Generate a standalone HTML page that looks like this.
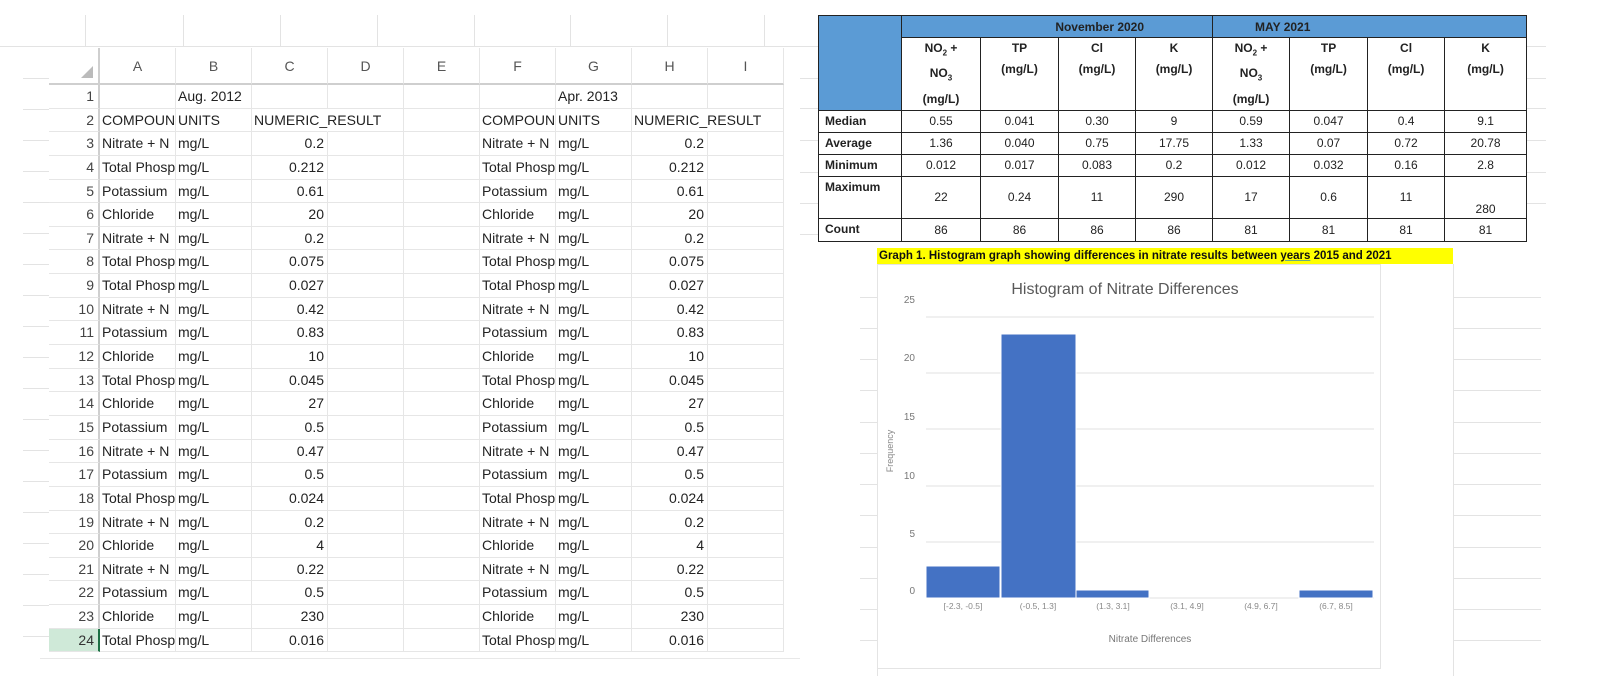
<!DOCTYPE html>
<html><head><meta charset="utf-8">
<style>
*{margin:0;padding:0;box-sizing:border-box}
body{width:1602px;height:698px;background:#fff;position:relative;overflow:hidden;font-family:"Liberation Sans",sans-serif}
.a{position:absolute}
.hl{position:absolute;height:1px;background:#e3e3e3}
.vl{position:absolute;width:1px;background:#e3e3e3}
.sheet{position:absolute;left:49px;top:48px;width:733px;font-size:14px;color:#222}
.row{display:flex;height:23.65px;line-height:23px;position:relative}
.row>div{flex:0 0 76px;width:76px;border-right:1px solid #e6e6e6;border-bottom:1px solid #e6e6e6;overflow:hidden;white-space:nowrap;padding:0 2px;position:relative}
.row>div.n{flex:0 0 51px;width:51px;text-align:right;color:#444;border-right:2px solid #cfcfcf;padding-right:4px}
.row>div.r{text-align:right;padding-right:3px}
.row.h{height:37px;line-height:36px}
.row.h>div{text-align:center;color:#555;border-bottom:2px solid #cfcfcf}
.ov{position:absolute;white-space:nowrap;line-height:23px}
table.t{position:absolute;left:818px;top:15px;width:708px;border-collapse:collapse;table-layout:fixed;font-size:12px;color:#222}
table.t td{border:1px solid #222;text-align:center;vertical-align:middle;padding:0;overflow:hidden}
table.t .b{font-weight:bold}
table.t .bl{background:#5b9bd5}
table.t td.lb{text-align:left;font-weight:bold;padding-left:6px;vertical-align:top;padding-top:3px}
table.t td.hd{font-weight:bold;vertical-align:top;line-height:21px}
</style></head><body>
<div class="hl" style="left:0;top:46px;width:800px"></div>
<div class="vl" style="left:85px;top:15px;height:32px"></div>
<div class="vl" style="left:183px;top:15px;height:32px"></div>
<div class="vl" style="left:280px;top:15px;height:32px"></div>
<div class="vl" style="left:377px;top:15px;height:32px"></div>
<div class="vl" style="left:474px;top:15px;height:32px"></div>
<div class="vl" style="left:570px;top:15px;height:32px"></div>
<div class="vl" style="left:667px;top:15px;height:32px"></div>
<div class="vl" style="left:764px;top:15px;height:32px"></div>
<div class="hl" style="left:23px;top:78px;width:26px"></div>
<div class="hl" style="left:23px;top:109px;width:26px"></div>
<div class="hl" style="left:23px;top:140px;width:26px"></div>
<div class="hl" style="left:23px;top:171px;width:26px"></div>
<div class="hl" style="left:23px;top:202px;width:26px"></div>
<div class="hl" style="left:23px;top:233px;width:26px"></div>
<div class="hl" style="left:23px;top:264px;width:26px"></div>
<div class="hl" style="left:23px;top:295px;width:26px"></div>
<div class="hl" style="left:23px;top:326px;width:26px"></div>
<div class="hl" style="left:23px;top:357px;width:26px"></div>
<div class="hl" style="left:23px;top:388px;width:26px"></div>
<div class="hl" style="left:23px;top:419px;width:26px"></div>
<div class="hl" style="left:23px;top:450px;width:26px"></div>
<div class="hl" style="left:23px;top:481px;width:26px"></div>
<div class="hl" style="left:23px;top:512px;width:26px"></div>
<div class="hl" style="left:23px;top:543px;width:26px"></div>
<div class="hl" style="left:23px;top:574px;width:26px"></div>
<div class="hl" style="left:23px;top:605px;width:26px"></div>
<div class="hl" style="left:23px;top:636px;width:26px"></div>
<div class="hl" style="left:40px;top:658px;width:760px;background:#e8e8e8"></div>

<div class="sheet">
<div class="row h"><div class="n" style="position:relative"><span style="position:absolute;right:5px;bottom:5px;width:0;height:0;border-left:12px solid transparent;border-bottom:12px solid #bbb"></span></div><div>A</div><div>B</div><div>C</div><div>D</div><div>E</div><div>F</div><div>G</div><div>H</div><div>I</div></div>
<div class="row"><div class="n">1</div><div></div><div>Aug. 2012</div><div></div><div></div><div></div><div></div><div>Apr. 2013</div><div></div><div></div></div>
<div class="row"><div class="n">2</div><div>COMPOUND</div><div>UNITS</div><div style="border-right-color:transparent;overflow:visible">NUMERIC_RESULT</div><div></div><div></div><div>COMPOUND</div><div>UNITS</div><div style="border-right-color:transparent;overflow:visible">NUMERIC_RESULT</div><div></div></div>
<div class="row"><div class="n">3</div><div>Nitrate + N</div><div>mg/L</div><div class="r">0.2</div><div></div><div></div><div>Nitrate + N</div><div>mg/L</div><div class="r">0.2</div><div></div></div>
<div class="row"><div class="n">4</div><div>Total Phosphorus</div><div>mg/L</div><div class="r">0.212</div><div></div><div></div><div>Total Phosphorus</div><div>mg/L</div><div class="r">0.212</div><div></div></div>
<div class="row"><div class="n">5</div><div>Potassium</div><div>mg/L</div><div class="r">0.61</div><div></div><div></div><div>Potassium</div><div>mg/L</div><div class="r">0.61</div><div></div></div>
<div class="row"><div class="n">6</div><div>Chloride</div><div>mg/L</div><div class="r">20</div><div></div><div></div><div>Chloride</div><div>mg/L</div><div class="r">20</div><div></div></div>
<div class="row"><div class="n">7</div><div>Nitrate + N</div><div>mg/L</div><div class="r">0.2</div><div></div><div></div><div>Nitrate + N</div><div>mg/L</div><div class="r">0.2</div><div></div></div>
<div class="row"><div class="n">8</div><div>Total Phosphorus</div><div>mg/L</div><div class="r">0.075</div><div></div><div></div><div>Total Phosphorus</div><div>mg/L</div><div class="r">0.075</div><div></div></div>
<div class="row"><div class="n">9</div><div>Total Phosphorus</div><div>mg/L</div><div class="r">0.027</div><div></div><div></div><div>Total Phosphorus</div><div>mg/L</div><div class="r">0.027</div><div></div></div>
<div class="row"><div class="n">10</div><div>Nitrate + N</div><div>mg/L</div><div class="r">0.42</div><div></div><div></div><div>Nitrate + N</div><div>mg/L</div><div class="r">0.42</div><div></div></div>
<div class="row"><div class="n">11</div><div>Potassium</div><div>mg/L</div><div class="r">0.83</div><div></div><div></div><div>Potassium</div><div>mg/L</div><div class="r">0.83</div><div></div></div>
<div class="row"><div class="n">12</div><div>Chloride</div><div>mg/L</div><div class="r">10</div><div></div><div></div><div>Chloride</div><div>mg/L</div><div class="r">10</div><div></div></div>
<div class="row"><div class="n">13</div><div>Total Phosphorus</div><div>mg/L</div><div class="r">0.045</div><div></div><div></div><div>Total Phosphorus</div><div>mg/L</div><div class="r">0.045</div><div></div></div>
<div class="row"><div class="n">14</div><div>Chloride</div><div>mg/L</div><div class="r">27</div><div></div><div></div><div>Chloride</div><div>mg/L</div><div class="r">27</div><div></div></div>
<div class="row"><div class="n">15</div><div>Potassium</div><div>mg/L</div><div class="r">0.5</div><div></div><div></div><div>Potassium</div><div>mg/L</div><div class="r">0.5</div><div></div></div>
<div class="row"><div class="n">16</div><div>Nitrate + N</div><div>mg/L</div><div class="r">0.47</div><div></div><div></div><div>Nitrate + N</div><div>mg/L</div><div class="r">0.47</div><div></div></div>
<div class="row"><div class="n">17</div><div>Potassium</div><div>mg/L</div><div class="r">0.5</div><div></div><div></div><div>Potassium</div><div>mg/L</div><div class="r">0.5</div><div></div></div>
<div class="row"><div class="n">18</div><div>Total Phosphorus</div><div>mg/L</div><div class="r">0.024</div><div></div><div></div><div>Total Phosphorus</div><div>mg/L</div><div class="r">0.024</div><div></div></div>
<div class="row"><div class="n">19</div><div>Nitrate + N</div><div>mg/L</div><div class="r">0.2</div><div></div><div></div><div>Nitrate + N</div><div>mg/L</div><div class="r">0.2</div><div></div></div>
<div class="row"><div class="n">20</div><div>Chloride</div><div>mg/L</div><div class="r">4</div><div></div><div></div><div>Chloride</div><div>mg/L</div><div class="r">4</div><div></div></div>
<div class="row"><div class="n">21</div><div>Nitrate + N</div><div>mg/L</div><div class="r">0.22</div><div></div><div></div><div>Nitrate + N</div><div>mg/L</div><div class="r">0.22</div><div></div></div>
<div class="row"><div class="n">22</div><div>Potassium</div><div>mg/L</div><div class="r">0.5</div><div></div><div></div><div>Potassium</div><div>mg/L</div><div class="r">0.5</div><div></div></div>
<div class="row"><div class="n">23</div><div>Chloride</div><div>mg/L</div><div class="r">230</div><div></div><div></div><div>Chloride</div><div>mg/L</div><div class="r">230</div><div></div></div>
<div class="row"><div class="n" style="background:#cfe9d8;border-right:2px solid #1e7145;color:#333">24</div><div>Total Phosphorus</div><div>mg/L</div><div class="r">0.016</div><div></div><div></div><div>Total Phosphorus</div><div>mg/L</div><div class="r">0.016</div><div></div></div>
</div>

<div class="hl" style="left:800px;top:46px;width:18px"></div>
<div class="hl" style="left:800px;top:78px;width:18px"></div>
<div class="hl" style="left:800px;top:108px;width:18px"></div>
<div class="hl" style="left:800px;top:140px;width:18px"></div>
<div class="hl" style="left:800px;top:172px;width:18px"></div>
<div class="hl" style="left:800px;top:203px;width:18px"></div>
<div class="hl" style="left:800px;top:234px;width:18px"></div>
<div class="hl" style="left:1526px;top:46px;width:20px"></div>
<div class="hl" style="left:1526px;top:78px;width:20px"></div>
<div class="hl" style="left:1526px;top:108px;width:20px"></div>
<div class="hl" style="left:1526px;top:140px;width:20px"></div>
<div class="hl" style="left:1526px;top:172px;width:20px"></div>
<div class="hl" style="left:1526px;top:203px;width:20px"></div>

<table class="t">
<colgroup><col style="width:83px"><col style="width:79px"><col style="width:78px"><col style="width:77px"><col style="width:77px"><col style="width:77px"><col style="width:78px"><col style="width:77px"><col style="width:82px"></colgroup>
<tr style="height:22px"><td class="bl" rowspan="2"></td><td class="bl b" colspan="4" style="text-align:right;padding-right:68px">November 2020</td><td class="bl b" colspan="4" style="text-align:left;padding-left:42px">MAY 2021</td></tr>
<tr style="height:68px"><td class="hd">NO<sub style="font-size:8px">2</sub> +<br>NO<sub style="font-size:8px">3</sub><br>(mg/L)</td><td class="hd">TP<br>(mg/L)</td><td class="hd">Cl<br>(mg/L)</td><td class="hd">K<br>(mg/L)</td><td class="hd">NO<sub style="font-size:8px">2</sub> +<br>NO<sub style="font-size:8px">3</sub><br>(mg/L)</td><td class="hd">TP<br>(mg/L)</td><td class="hd">Cl<br>(mg/L)</td><td class="hd">K<br>(mg/L)</td></tr>
<tr style="height:22px"><td class="lb">Median</td><td>0.55</td><td>0.041</td><td>0.30</td><td>9</td><td>0.59</td><td>0.047</td><td>0.4</td><td>9.1</td></tr>
<tr style="height:22px"><td class="lb">Average</td><td>1.36</td><td>0.040</td><td>0.75</td><td>17.75</td><td>1.33</td><td>0.07</td><td>0.72</td><td>20.78</td></tr>
<tr style="height:22px"><td class="lb">Minimum</td><td>0.012</td><td>0.017</td><td>0.083</td><td>0.2</td><td>0.012</td><td>0.032</td><td>0.16</td><td>2.8</td></tr>
<tr style="height:42px"><td class="lb">Maximum</td><td>22</td><td>0.24</td><td>11</td><td>290</td><td>17</td><td>0.6</td><td>11</td><td style="vertical-align:bottom;padding-bottom:2px">280</td></tr>
<tr style="height:23px"><td class="lb">Count</td><td>86</td><td>86</td><td>86</td><td>86</td><td>81</td><td>81</td><td>81</td><td>81</td></tr>
</table>

<div class="a" style="left:877px;top:248px;width:576px;height:16px;background:#ffff00;font-weight:bold;font-size:11.5px;line-height:16px;color:#111;white-space:nowrap;padding-left:2px;overflow:hidden">Graph 1. Histogram graph showing differences in nitrate results between <span style="text-decoration:underline;text-decoration-color:#6a8;">years</span> 2015 and 2021</div>

<div class="vl" style="left:877px;top:264px;height:412px"></div>
<div class="vl" style="left:1453px;top:264px;height:412px"></div>
<div class="hl" style="left:860px;top:297px;width:17px"></div><div class="hl" style="left:1453px;top:297px;width:88px"></div>
<div class="hl" style="left:860px;top:328px;width:17px"></div><div class="hl" style="left:1453px;top:328px;width:88px"></div>
<div class="hl" style="left:860px;top:359px;width:17px"></div><div class="hl" style="left:1453px;top:359px;width:88px"></div>
<div class="hl" style="left:860px;top:390px;width:17px"></div><div class="hl" style="left:1453px;top:390px;width:88px"></div>
<div class="hl" style="left:860px;top:422px;width:17px"></div><div class="hl" style="left:1453px;top:422px;width:88px"></div>
<div class="hl" style="left:860px;top:453px;width:17px"></div><div class="hl" style="left:1453px;top:453px;width:88px"></div>
<div class="hl" style="left:860px;top:484px;width:17px"></div><div class="hl" style="left:1453px;top:484px;width:88px"></div>
<div class="hl" style="left:860px;top:515px;width:17px"></div><div class="hl" style="left:1453px;top:515px;width:88px"></div>
<div class="hl" style="left:860px;top:547px;width:17px"></div><div class="hl" style="left:1453px;top:547px;width:88px"></div>
<div class="hl" style="left:860px;top:578px;width:17px"></div><div class="hl" style="left:1453px;top:578px;width:88px"></div>
<div class="hl" style="left:860px;top:609px;width:17px"></div><div class="hl" style="left:1453px;top:609px;width:88px"></div>
<div class="hl" style="left:860px;top:640px;width:17px"></div><div class="hl" style="left:1453px;top:640px;width:88px"></div>

<svg class="a" style="left:877px;top:264px" width="506" height="410" viewBox="0 0 506 410">
<rect x="0.5" y="0.5" width="503" height="404" fill="#fff" stroke="#e4e4e4"/>
<g stroke="#e2e2e2" stroke-width="1">
<line x1="49" y1="53" x2="497" y2="53"/>
<line x1="49" y1="109" x2="497" y2="109"/>
<line x1="49" y1="165" x2="497" y2="165"/>
<line x1="49" y1="222" x2="497" y2="222"/>
<line x1="49" y1="278" x2="497" y2="278"/>
<line x1="49" y1="334" x2="497" y2="334"/>
</g>
<g fill="#4472c4" stroke="#fff" stroke-width="1">
<rect x="49" y="302" width="74" height="32"/>
<rect x="124" y="70" width="75" height="264"/>
<rect x="199" y="326" width="73" height="8"/>
<rect x="422" y="326" width="74" height="8"/>
</g>
<text x="248" y="30" text-anchor="middle" font-family="Liberation Sans, sans-serif" font-size="16" fill="#595959">Histogram of Nitrate Differences</text>
<g font-family="Liberation Sans, sans-serif" font-size="10" fill="#777" text-anchor="end">
<text x="38" y="39">25</text><text x="38" y="97">20</text><text x="38" y="156">15</text><text x="38" y="215">10</text><text x="38" y="273">5</text><text x="38" y="330">0</text>
</g>
<g font-family="Liberation Sans, sans-serif" font-size="8.5" fill="#888" text-anchor="middle">
<text x="86" y="345">[-2.3, -0.5]</text><text x="161" y="345">(-0.5, 1.3]</text><text x="236" y="345">(1.3, 3.1]</text><text x="310" y="345">(3.1, 4.9]</text><text x="384" y="345">(4.9, 6.7]</text><text x="459" y="345">(6.7, 8.5]</text>
</g>
<text x="273" y="378" text-anchor="middle" font-family="Liberation Sans, sans-serif" font-size="10" fill="#777">Nitrate Differences</text>
<text transform="translate(16,187) rotate(-90)" text-anchor="middle" font-family="Liberation Sans, sans-serif" font-size="9" fill="#888">Frequency</text>
</svg>
</body></html>
